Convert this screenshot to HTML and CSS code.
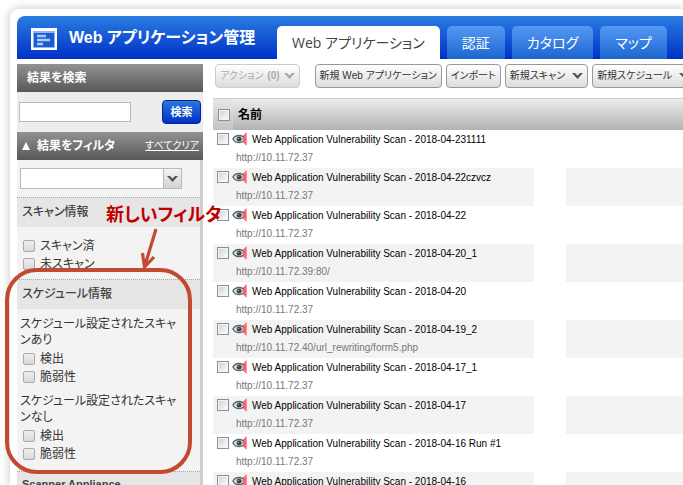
FILE: index.html
```html
<!DOCTYPE html>
<html lang="ja">
<head>
<meta charset="utf-8">
<title>Web アプリケーション管理</title>
<link rel="stylesheet" href="styles.css">
</head>
<body>
<svg class="defs" aria-hidden="true">
  <symbol id="eye" viewBox="0 0 15 14">
    <path d="M8 7 14.500 0v14z" fill="#fb6b6f"/>
    <path d="M1 7C3.500 2.200 10.500 2.200 13 7C10.500 11.800 3.500 11.800 1 7z" fill="#e9edef" stroke="#56656d" stroke-width="1.500"/>
    <path d="M9 7 14.500 1v12z" fill="#fb6b6f" opacity=".7"/>
    <circle cx="7" cy="7" r="2.500" fill="#35434b"/>
    <circle cx="6.300" cy="6.200" r=".8" fill="#a9b4ba"/>
  </symbol>
  <symbol id="chevron" viewBox="0 0 11 6">
    <path d="M0 0h3l2.500 2.500L8 0h3L5.500 6z" fill="currentColor"/>
  </symbol>
</svg>
<div class="app">
  <header class="topbar">
    <svg class="logo" viewBox="0 0 26 22" aria-hidden="true">
      <path d="M0 0h26v22H0z" fill="#fff"/>
      <path d="M2 3h22v17H2z" fill="#8db6f3"/>
      <path d="M3 5h20v14H3z" fill="#1b5bd2"/>
      <path d="M6 8h9M6 12h13M6 16h6" stroke="#a9cbfa" stroke-width="2.500"/>
    </svg>
    <h1 class="title">Web アプリケーション管理</h1>
    <nav class="tabs">
      <a class="tab tab-active" href="#apps">Web アプリケーション</a>
      <a class="tab" href="#auth">認証</a>
      <a class="tab" href="#catalog">カタログ</a>
      <a class="tab" href="#map">マップ</a>
    </nav>
  </header>
  <div class="columns">
    <aside class="sidebar">
      <h2 class="bar"><label for="q">結果を検索</label></h2>
      <form class="search">
        <input class="search-box" id="q" type="text">
        <button class="search-go" type="button">検索</button>
      </form>
      <div class="bar bar-filter">
        <svg class="tri" viewBox="0 0 8 8" aria-hidden="true"><path d="M4 0l4 8H0z" fill="#fff"/></svg>
        <h2 class="bar-title">結果をフィルタ</h2>
        <a class="clear" href="#clear">すべてクリア</a>
      </div>
      <div class="filters">
        <div class="picker">
          <select class="select" aria-label="フィルタ"><option></option></select>
          <span class="picker-arrow"><svg class="chev-small"><use href="#chevron"/></svg></span>
        </div>
        <h3 class="section">スキャン情報</h3>
        <div class="group group-first">
          <label class="check"><input class="box" type="checkbox">スキャン済</label>
          <label class="check"><input class="box" type="checkbox">未スキャン</label>
        </div>
        <h3 class="section">スケジュール情報</h3>
        <div class="group">
          <p class="note">スケジュール設定されたスキャンあり</p>
          <label class="check"><input class="box" type="checkbox">検出</label>
          <label class="check"><input class="box" type="checkbox">脆弱性</label>
        </div>
        <div class="group group-last">
          <p class="note">スケジュール設定されたスキャンなし</p>
          <label class="check"><input class="box" type="checkbox">検出</label>
          <label class="check"><input class="box" type="checkbox">脆弱性</label>
        </div>
        <h3 class="section section-latin">Scanner Appliance</h3>
      </div>
    </aside>
    <main class="main">
      <div class="toolbar">
        <button class="btn btn-actions" type="button" disabled>アクション <b>(0)</b> <svg class="chev"><use href="#chevron"/></svg></button>
        <button class="btn" type="button">新規 Web アプリケーション</button>
        <button class="btn" type="button">インポート</button>
        <button class="btn" type="button">新規スキャン <svg class="chev"><use href="#chevron"/></svg></button>
        <button class="btn" type="button">新規スケジュール <svg class="chev"><use href="#chevron"/></svg></button>
      </div>
      <table class="list">
        <colgroup><col class="col-name"><col class="col-gap"><col></colgroup>
        <thead>
          <tr><th colspan="3"><div class="head"><span class="head-check"><input class="tick" type="checkbox" aria-label="すべて選択"></span>名前</div></th></tr>
        </thead>
        <tbody>
          <tr><td><div class="item"><input class="tick" id="r1" type="checkbox"><svg class="eye"><use href="#eye"/></svg><label for="r1">Web Application Vulnerability Scan - 2018-04-231111</label></div><div class="url">http://10.11.72.37</div></td><td class="gap"></td><td></td></tr>
          <tr><td><div class="item"><input class="tick" id="r2" type="checkbox"><svg class="eye"><use href="#eye"/></svg><label for="r2">Web Application Vulnerability Scan - 2018-04-22czvcz</label></div><div class="url">http://10.11.72.37</div></td><td class="gap"></td><td></td></tr>
          <tr><td><div class="item"><input class="tick" id="r3" type="checkbox"><svg class="eye"><use href="#eye"/></svg><label for="r3">Web Application Vulnerability Scan - 2018-04-22</label></div><div class="url">http://10.11.72.37</div></td><td class="gap"></td><td></td></tr>
          <tr><td><div class="item"><input class="tick" id="r4" type="checkbox"><svg class="eye"><use href="#eye"/></svg><label for="r4">Web Application Vulnerability Scan - 2018-04-20_1</label></div><div class="url">http://10.11.72.39:80/</div></td><td class="gap"></td><td></td></tr>
          <tr><td><div class="item"><input class="tick" id="r5" type="checkbox"><svg class="eye"><use href="#eye"/></svg><label for="r5">Web Application Vulnerability Scan - 2018-04-20</label></div><div class="url">http://10.11.72.37</div></td><td class="gap"></td><td></td></tr>
          <tr><td><div class="item"><input class="tick" id="r6" type="checkbox"><svg class="eye"><use href="#eye"/></svg><label for="r6">Web Application Vulnerability Scan - 2018-04-19_2</label></div><div class="url">http://10.11.72.40/url_rewriting/form5.php</div></td><td class="gap"></td><td></td></tr>
          <tr><td><div class="item"><input class="tick" id="r7" type="checkbox"><svg class="eye"><use href="#eye"/></svg><label for="r7">Web Application Vulnerability Scan - 2018-04-17_1</label></div><div class="url">http://10.11.72.37</div></td><td class="gap"></td><td></td></tr>
          <tr><td><div class="item"><input class="tick" id="r8" type="checkbox"><svg class="eye"><use href="#eye"/></svg><label for="r8">Web Application Vulnerability Scan - 2018-04-17</label></div><div class="url">http://10.11.72.37</div></td><td class="gap"></td><td></td></tr>
          <tr><td><div class="item"><input class="tick" id="r9" type="checkbox"><svg class="eye"><use href="#eye"/></svg><label for="r9">Web Application Vulnerability Scan - 2018-04-16 Run #1</label></div><div class="url">http://10.11.72.37</div></td><td class="gap"></td><td></td></tr>
          <tr><td><div class="item"><input class="tick" id="r10" type="checkbox"><svg class="eye"><use href="#eye"/></svg><label for="r10">Web Application Vulnerability Scan - 2018-04-16</label></div></td><td class="gap"></td><td></td></tr>
        </tbody>
      </table>
    </main>
  </div>
</div>
<div class="callout-frame"></div>
<svg class="callout-arrow" viewBox="0 0 20 44" aria-hidden="true"><path d="M15 2L3.500 40M1.500 26L3.500 40L13 30" fill="none" stroke="#c24a30" stroke-width="3.200"/></svg>
<p class="callout-text">新しいフィルタ</p>
</body>
</html>
```

FILE: styles.css
```css
* { box-sizing: border-box; }
body {
  margin: 0;
  height: 100vh;
  overflow: hidden;
  position: relative;
  background: #fff;
  color: #222;
  font: 12px/16px "Liberation Sans", "Noto Sans CJK JP", sans-serif;
  font-feature-settings: "palt";
}
h1, h2, h3, p { margin: 0; font-size: inherit; }
input, button, select { font: inherit; font-feature-settings: inherit; margin: 0; }
.defs { position: absolute; width: 0; height: 0; }

.app {
  margin: 9px 0 0 10px;
  padding: 7px 0 0 7px;
  height: calc(100vh - 9px);
  overflow: hidden;
  background: #fff;
  border-radius: 8px 0 0 0;
  box-shadow: 0 0 9px 1px #ccc;
}
.topbar {
  display: flex;
  align-items: center;
  height: 43px;
  padding-left: 14px;
  border-radius: 8px 0 0 0;
  background: linear-gradient(#2a7de0, #0030c8);
}
.logo { flex: none; width: 26px; height: 22px; margin-top: 3px; }
.title {
  width: 220px;
  flex: none;
  padding-left: 12px;
  color: #fff;
  font-size: 16px;
  line-height: 24px;
  white-space: nowrap;
}
.tabs { display: flex; align-self: flex-end; gap: 7px; }
.tab {
  display: flex;
  align-items: center;
  height: 33px;
  padding: 0 15px;
  border-radius: 5px 5px 0 0;
  background: linear-gradient(#5598f5, #1c66cf);
  color: #fff;
  font-family: "Open Sans", "Noto Sans CJK JP", sans-serif;
  font-size: 14px;
  text-decoration: none;
  white-space: nowrap;
}
.tab-active { background: #fff; color: #444; }

.columns { display: flex; gap: 10px; padding-top: 5px; }
.sidebar { flex: none; width: 186px; }
.bar {
  display: flex;
  align-items: center;
  height: 28px;
  padding: 0 10px;
  background: linear-gradient(#929292, #585858);
  color: #fff;
  font-size: 12px;
  font-weight: bold;
}
.search {
  display: flex;
  align-items: center;
  justify-content: space-between;
  height: 40px;
  padding: 0 2px;
  background: #ededed;
}
.search-box { width: 112px; height: 20px; border: 1px solid #b5b8c8; background: #fff; }
.search-go {
  width: 39px;
  height: 24px;
  padding: 0;
  border: 1px solid #00269e;
  border-radius: 4px;
  background: linear-gradient(#2a78dc, #0030c4);
  color: #fff;
  font-size: 11px;
  font-weight: bold;
}
.bar-filter { padding: 0 4px 0 5px; }
.tri { width: 8px; height: 8px; }
.bar-title { flex: 1; padding-left: 7px; }
.clear { color: #fff; font-size: 10px; font-weight: normal; }
.filters {
  border-right: 3px solid #d0cdcb;
  background: #f3f3f3;
  color: #333;
}
.picker { display: flex; height: 37px; padding: 8px 3px; }
.select { width: 144px; height: 21px; appearance: none; border: 1px solid #b5b8c8; background: #fff; }
.picker-arrow {
  display: flex;
  align-items: center;
  justify-content: center;
  width: 18px;
  height: 21px;
  border: 1px solid #b5b8c8;
  border-left: 0;
  background: linear-gradient(#f4f4f4, #d2d2d2);
  color: #555;
}
.chev-small { width: 11px; height: 6px; }
.section {
  height: 30px;
  padding-left: 5px;
  border-top: 1px dotted #aaa;
  background: #e6e6e6;
  color: #444;
  font-size: 12px;
  font-weight: 500;
  line-height: 28px;
}
.section-latin { font-size: 11px; font-weight: bold; line-height: 24px; }
.group { padding: 7px 4px 0 3px; }
.group-first { padding: 10px 4px 6px 3px; }
.group-last { padding-bottom: 8px; }
.note { padding: 0 15px 2px 0; }
.check { display: flex; align-items: center; gap: 5px; height: 18px; padding-left: 3px; }
.box, .tick {
  flex: none;
  appearance: none;
  width: 12px;
  height: 12px;
  border: 1px solid #aaa;
  border-radius: 2px;
  background: linear-gradient(#eee, #d8d8d8);
}

.main { flex: 1; min-width: 0; overflow: hidden; }
.toolbar { display: flex; gap: 4px; padding-left: 2px; }
.btn {
  display: flex;
  flex: none;
  align-items: center;
  gap: 7px;
  height: 24px;
  padding: 0 4px;
  border: 1px solid #999;
  border-radius: 4px;
  background: linear-gradient(#fff, #dcdcdc);
  color: #333;
  font-size: 10px;
  white-space: nowrap;
}
.btn .chev { color: #555; }
.btn:disabled { border-color: #ccc; color: #aaa; }
.btn:disabled .chev { color: #aaa; }
.btn-actions { gap: 4px; margin-right: 11px; }
.chev { width: 11px; height: 6px; }
.list {
  width: 100%;
  margin-top: 10px;
  border-collapse: collapse;
  table-layout: fixed;
}
.col-name { width: 321px; }
.col-gap { width: 32px; }
th, td { padding: 0; text-align: left; vertical-align: top; }
.head {
  display: flex;
  align-items: center;
  gap: 5px;
  height: 32px;
  border-top: 1px solid #ccc;
  background: linear-gradient(#ececec, #b2b2b2);
  color: #000;
  font-size: 12px;
}
.head-check { display: flex; align-items: center; width: 20px; height: 31px; padding-left: 5px; background: #e0e0e060; }
.list td { height: 38px; }
.list tbody tr:nth-child(even) { background: #f3f3f3; }
.list .gap { background: #fff; }
.item { display: flex; align-items: center; height: 18px; padding-left: 4px; color: #000; font-size: 10px; white-space: nowrap; }
.item label { padding-top: 2px; }
.item .eye { width: 15px; height: 14px; margin: 0 5px 0 3px; }
.tick { border: 1px solid #8e8f8f; border-radius: 0; box-shadow: inset 0 0 0 1px #f4f4f4; background: linear-gradient(135deg, #ccd0d4, #fff); }
.url { padding-left: 23px; color: #777; font-size: 10px; line-height: 20px; }

.callout-frame {
  position: absolute;
  left: 5px;
  top: 268px;
  width: 187px;
  height: 206px;
  border: 4px solid #c24a30;
  border-radius: 32px;
  pointer-events: none;
}
.callout-arrow { position: absolute; left: 141px; top: 227px; width: 20px; height: 44px; }
.callout-text {
  position: absolute;
  left: 106px;
  top: 204px;
  color: #c00000;
  font-size: 18px;
  font-weight: bold;
  line-height: 22px;
  white-space: nowrap;
}
```
